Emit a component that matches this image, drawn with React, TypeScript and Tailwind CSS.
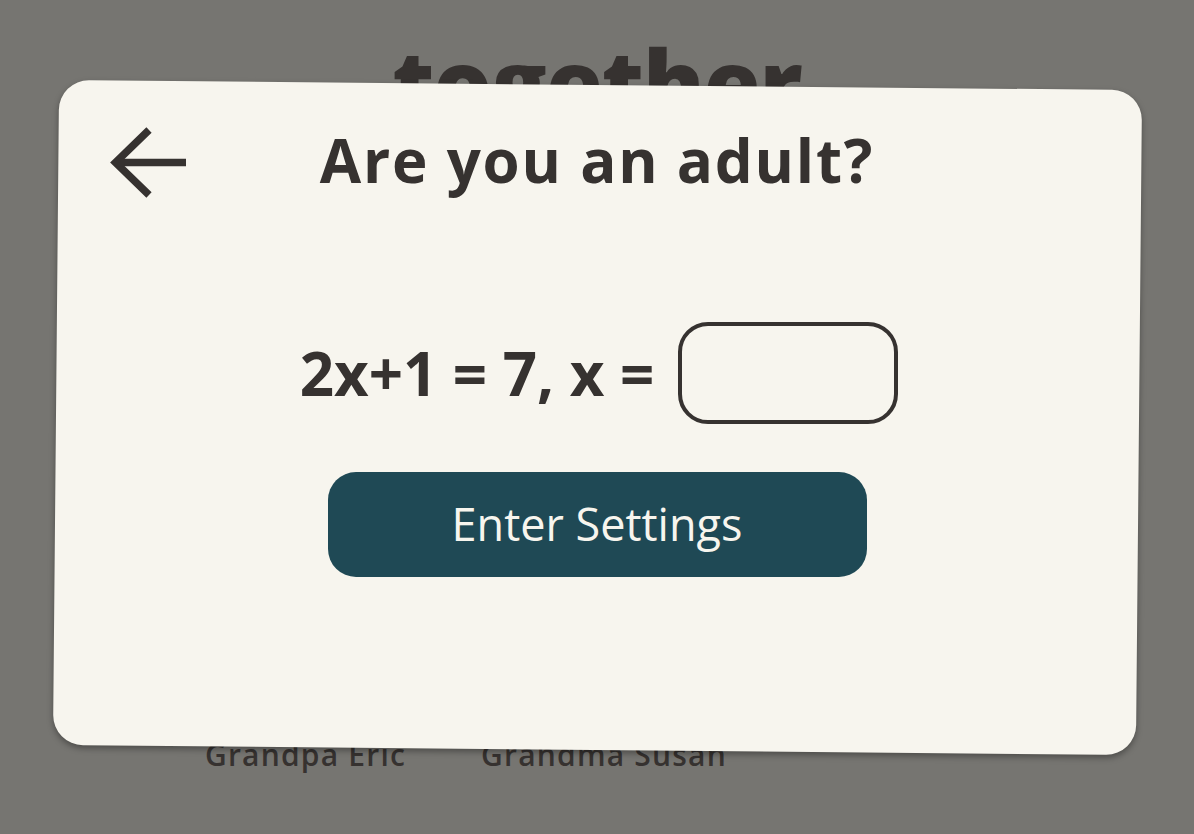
const BackArrow = () => (
  <svg width="76" height="71" viewBox="0 0 76 71" fill="none" stroke="#363230" strokeWidth="7.5">
    <path d="M39 3 L5.5 35.5 L39 68" />
    <path d="M5.5 35.5 H76" />
  </svg>
);

export default function App() {
  return (
    <div className="relative w-[1194px] h-[834px] overflow-hidden bg-[#767571] font-['Open_Sans',sans-serif] text-[#363230]">
      {/* page behind the dialog */}
      <div className="flex flex-col h-full">
        <h1 className="mt-[36px] text-center text-[92px] leading-none font-black tracking-[-1px]">together</h1>
        <div className="mt-auto mb-[57px] flex gap-[75px] pl-[205px] text-[30px] font-semibold tracking-[1.2px]">
          <span>Grandpa Eric</span>
          <span>Grandma Susan</span>
        </div>
      </div>

      {/* dialog */}
      <div className="absolute inset-0 flex items-center justify-center">
        <div className="relative w-[1083px] h-[665px]">
          <div className="absolute inset-0 rotate-[0.53deg] rounded-[30px] bg-[#f7f5ee] shadow-[0_3px_6px_rgba(0,0,0,0.35)]" />
          <div className="relative flex flex-col items-center pt-[40px]">
            <div className="grid w-full grid-cols-[1fr_auto_1fr] items-center px-[54px] h-[76px]">
              <button className="w-[76px]">
                <BackArrow />
              </button>
              <h2 className="mb-[6px] text-[60px] font-bold leading-none tracking-[1.8px]">Are you an adult?</h2>
              <div />
            </div>
            <div className="mt-[121px] flex items-center gap-[24px] pl-[4px]">
              <span className="text-[60px] font-bold leading-none">2x+1 = 7, x =</span>
              <input
                type="text"
                className="w-[220px] h-[102px] rounded-[30px] border-4 border-[#363230] bg-transparent outline-none"
              />
            </div>
            <button className="mt-[48px] w-[539px] h-[105px] rounded-[28px] bg-[#1f4955] text-[45px] text-[#f7f5ee]">
              Enter Settings
            </button>
          </div>
        </div>
      </div>
    </div>
  );
}
